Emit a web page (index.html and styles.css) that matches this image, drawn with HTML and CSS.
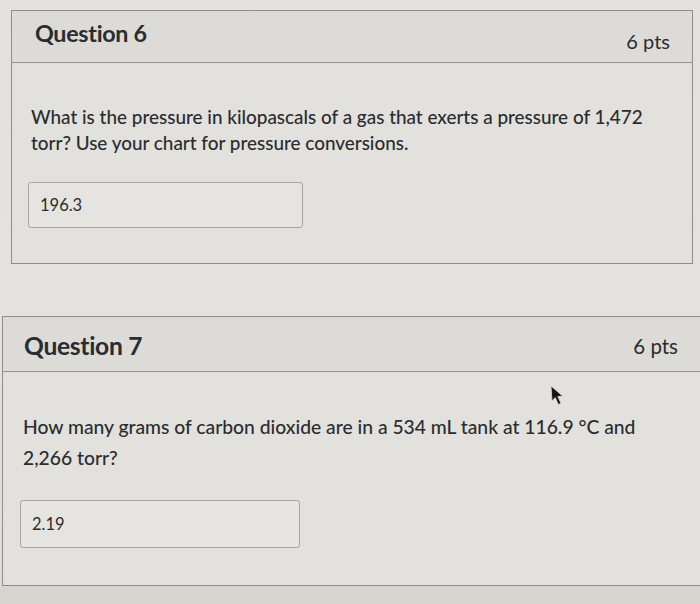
FILE: index.html
```html
<!DOCTYPE html>
<html>
<head>
<meta charset="utf-8">
<link rel="stylesheet" href="styles.css">
</head>
<body>
<div class="page">
  <section class="card card-one">
    <header class="card-head">
      <h2 class="title">Question 6</h2>
      <span class="pts">6 pts</span>
    </header>
    <div class="card-body">
      <p class="text">What is the pressure in kilopascals of a gas that exerts a pressure of 1,472 torr? Use your chart for pressure conversions.</p>
      <div class="answer">196.3</div>
    </div>
  </section>
  <section class="card card-two">
    <header class="card-head">
      <h2 class="title">Question 7</h2>
      <span class="pts">6 pts</span>
    </header>
    <div class="card-body">
      <p class="text">How many grams of carbon dioxide are in a 534 mL tank at 116.9 °C and 2,266 torr?</p>
      <div class="answer">2.19</div>
    </div>
  </section>
  <div class="bottom-strip"></div>
  <svg class="cursor" width="16" height="22" viewBox="0 0 16 22"><path d="M2 1 L3 16 L6.2 12.6 L9.4 19.5 L12 18.3 L8.8 11.6 L13.6 11 Z" fill="#161616" stroke="#d8d7d3" stroke-width="0.8" stroke-linejoin="round"/></svg>
</div>
</body>
</html>
```
FILE: styles.css
```css
html, body {
  margin: 0;
  padding: 0;
  width: 700px;
  height: 604px;
  overflow: hidden;
  background: #e3e2de;
  font-family: Lato, "Open Sans", sans-serif;
  color: #2a2c2f;
}
.page {
  position: relative;
  width: 700px;
  height: 604px;
  padding-top: 10px;
  box-sizing: border-box;
  background: linear-gradient(180deg, #e2e1dd 0%, #e4e3df 50%, #dcdbd6 100%);
}
.card {
  border: 1px solid #8f8e8a;
  box-sizing: border-box;
  display: flex;
  flex-direction: column;
}
.card-one {
  margin-left: 11px;
  width: 682px;
  height: 254px;
}
.card-two {
  margin-left: 2px;
  margin-top: 52px;
  width: 720px;
  height: 270px;
}
.card-head {
  display: flex;
  justify-content: space-between;
  align-items: flex-start;
  background: #dcdbd7;
  border-bottom: 1px solid #959490;
  height: 52px;
  box-sizing: border-box;
  flex: none;
}
.title {
  margin: 0;
  font-weight: 700;
  letter-spacing: -0.3px;
}
.pts {
  font-weight: 400;
}
.card-one .card-head { padding: 8px 22px 0 23px; }
.card-one .title { font-size: 23.3px; }
.card-one .pts { font-size: 20px; margin-top: 10px; }
.card-two .card-head { padding: 14px 43px 0 21px; height: 55px; }
.card-two .title { font-size: 24.6px; }
.card-two .pts { font-size: 20.5px; margin-top: 3px; }

.card-body {
  background: #e2e1dd;
  flex: 1;
}
.text {
  margin: 0;
  font-weight: 500;
}
.card-one .card-body { padding: 41px 20px 0 19px; }
.card-one .text { font-size: 18.9px; line-height: 26px; max-width: 640px; }
.card-two .card-body { padding: 39px 20px 0 20px; }
.card-two .text { font-size: 19.3px; line-height: 31px; max-width: 640px; }

.answer {
  border: 1px solid #a9a8a4;
  border-radius: 3px;
  background: #e5e4e0;
  box-sizing: border-box;
  display: flex;
  align-items: center;
  color: #2a2c2f;
}
.card-one .answer {
  margin-top: 26px;
  margin-left: -3px;
  width: 275px;
  height: 46px;
  padding-left: 11px;
  font-size: 16.5px;
}
.card-two .answer {
  margin-top: 27px;
  margin-left: -3px;
  width: 280px;
  height: 48px;
  padding-left: 11px;
  font-size: 16.5px;
}
.bottom-strip {
  height: 20px;
  background: #d6d5d0;
}
.cursor {
  position: absolute;
  left: 549px;
  top: 385px;
}
```
